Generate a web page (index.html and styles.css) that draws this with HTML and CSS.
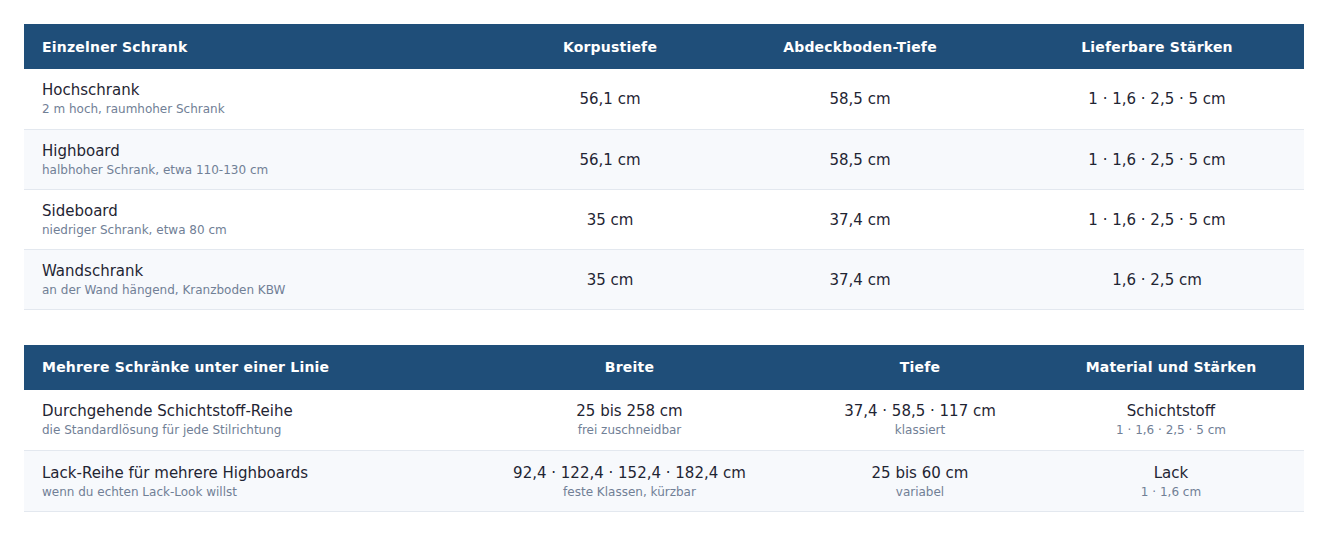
FILE: index.html
```html
<!DOCTYPE html>
<html lang="de">
<head>
<meta charset="utf-8">
<link rel="stylesheet" href="styles.css">
</head>
<body>
<table class="spec spec-a">
  <colgroup><col class="a1"><col class="a2"><col class="a3"><col class="a4"></colgroup>
  <thead>
    <tr><th class="left">Einzelner Schrank</th><th>Korpustiefe</th><th>Abdeckboden-Tiefe</th><th>Lieferbare Stärken</th></tr>
  </thead>
  <tbody>
    <tr><td class="left"><div class="name">Hochschrank</div><div class="sub">2 m hoch, raumhoher Schrank</div></td><td>56,1 cm</td><td>58,5 cm</td><td>1 · 1,6 · 2,5 · 5 cm</td></tr>
    <tr><td class="left"><div class="name">Highboard</div><div class="sub">halbhoher Schrank, etwa 110-130 cm</div></td><td>56,1 cm</td><td>58,5 cm</td><td>1 · 1,6 · 2,5 · 5 cm</td></tr>
    <tr><td class="left"><div class="name">Sideboard</div><div class="sub">niedriger Schrank, etwa 80 cm</div></td><td>35 cm</td><td>37,4 cm</td><td>1 · 1,6 · 2,5 · 5 cm</td></tr>
    <tr><td class="left"><div class="name">Wandschrank</div><div class="sub">an der Wand hängend, Kranzboden KBW</div></td><td>35 cm</td><td>37,4 cm</td><td>1,6 · 2,5 cm</td></tr>
  </tbody>
</table>
<table class="spec spec-b">
  <colgroup><col class="b1"><col class="b2"><col class="b3"><col class="b4"></colgroup>
  <thead>
    <tr><th class="left">Mehrere Schränke unter einer Linie</th><th>Breite</th><th>Tiefe</th><th>Material und Stärken</th></tr>
  </thead>
  <tbody>
    <tr><td class="left"><div class="name">Durchgehende Schichtstoff-Reihe</div><div class="sub">die Standardlösung für jede Stilrichtung</div></td><td><div class="name">25 bis 258 cm</div><div class="sub">frei zuschneidbar</div></td><td><div class="name">37,4 · 58,5 · 117 cm</div><div class="sub">klassiert</div></td><td><div class="name">Schichtstoff</div><div class="sub">1 · 1,6 · 2,5 · 5 cm</div></td></tr>
    <tr><td class="left"><div class="name">Lack-Reihe für mehrere Highboards</div><div class="sub">wenn du echten Lack-Look willst</div></td><td><div class="name">92,4 · 122,4 · 152,4 · 182,4 cm</div><div class="sub">feste Klassen, kürzbar</div></td><td><div class="name">25 bis 60 cm</div><div class="sub">variabel</div></td><td><div class="name">Lack</div><div class="sub">1 · 1,6 cm</div></td></tr>
  </tbody>
</table>
</body>
</html>
```
FILE: styles.css
```css
html, body { margin: 0; padding: 0; background: #ffffff; }
body {
  padding: 24px;
  font-family: "DejaVu Sans", "Liberation Sans", sans-serif;
  color: #1f2533;
}
.spec {
  width: 1280px;
  border-collapse: collapse;
  table-layout: fixed;
}
.spec-a { margin-bottom: 35px; }
.a1 { width: 486px; } .a2 { width: 200px; } .a3 { width: 300px; } .a4 { width: 294px; }
.b1 { width: 433px; } .b2 { width: 345px; } .b3 { width: 236px; } .b4 { width: 266px; }
.spec th {
  background: #1f4e79;
  color: #ffffff;
  font-size: 14px;
  font-weight: bold;
  height: 45px;
  padding: 0 18px;
  text-align: center;
  letter-spacing: 0.2px;
  box-sizing: border-box;
}
.spec td {
  height: 60px;
  padding: 1px 18px 0;
  text-align: center;
  font-size: 15px;
  border-bottom: 1px solid #e3e8ef;
  box-sizing: border-box;
}
.spec-b td { height: 61px; }
.spec .left { text-align: left; }
.spec tbody tr:nth-child(even) td { background: #f7f9fc; }
.name { font-size: 15px; line-height: 19px; color: #1f2533; }
.sub { font-size: 12px; line-height: 16px; color: #718096; margin-top: 1px; }
```
